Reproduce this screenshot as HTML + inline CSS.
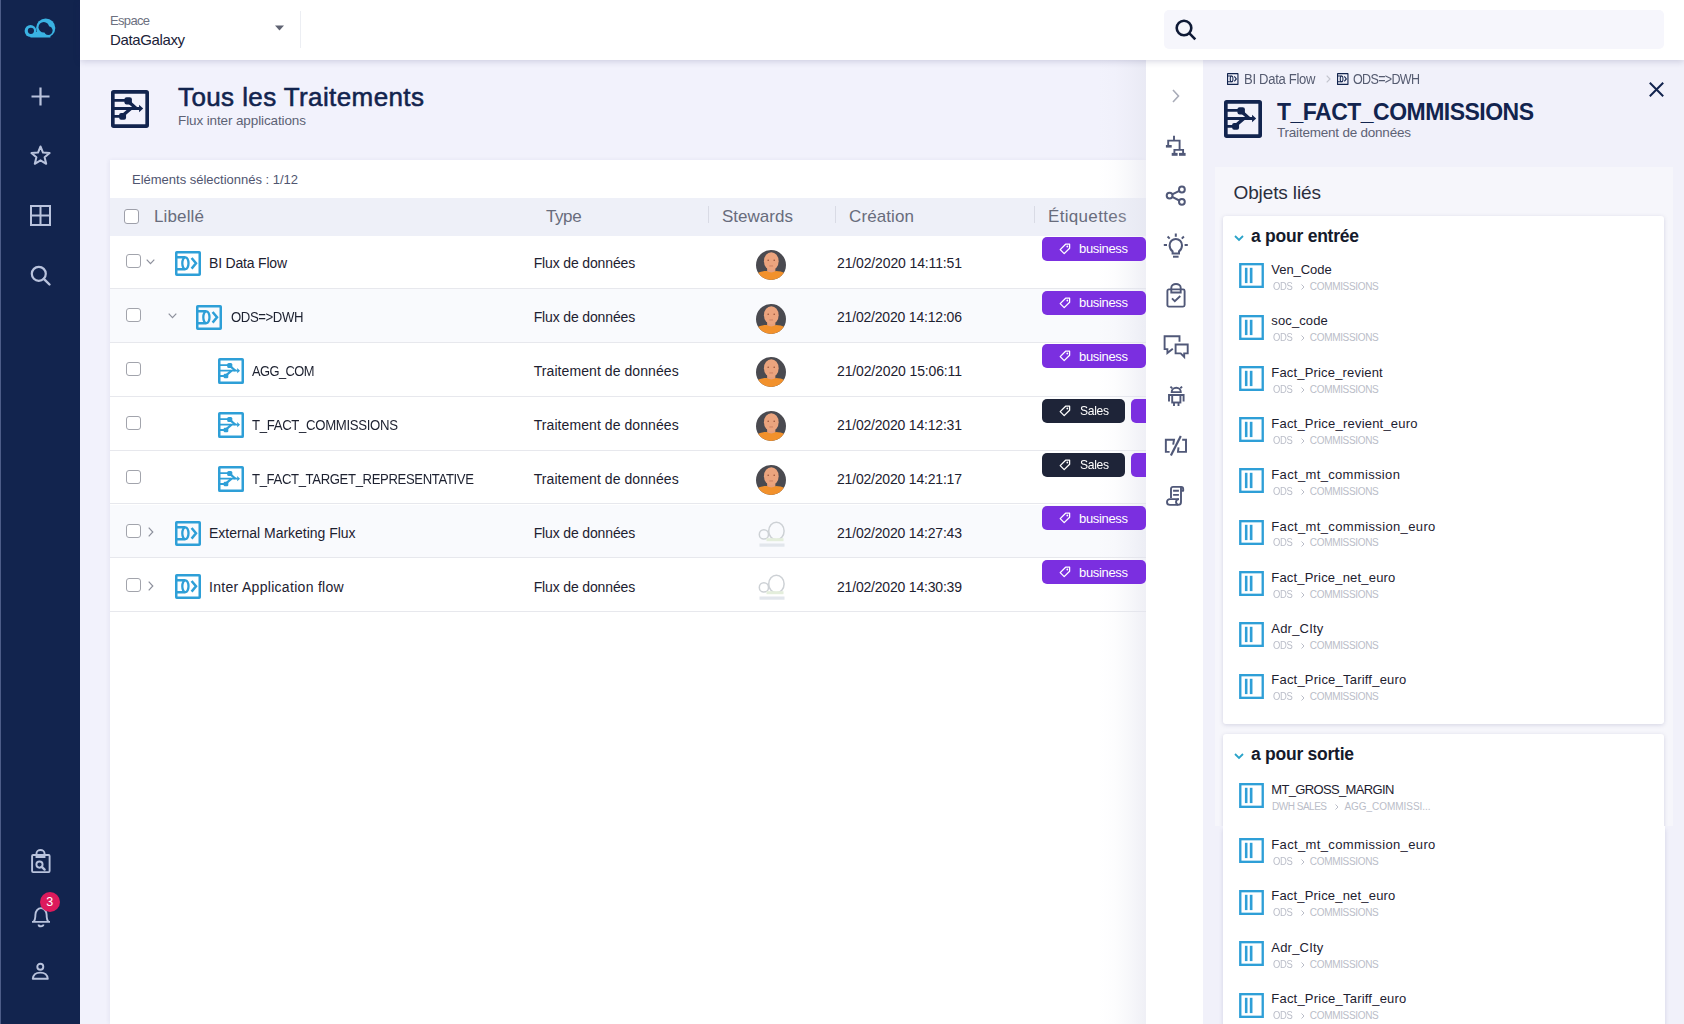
<!DOCTYPE html>
<html><head><meta charset="utf-8">
<style>
*{box-sizing:border-box;margin:0;padding:0}
html,body{width:1684px;height:1024px;overflow:hidden}
body{position:relative;background:#f2f2fc;font-family:"Liberation Sans",sans-serif;color:#1b1f2e}
.abs{position:absolute}
.t{position:absolute;white-space:nowrap;line-height:1}
svg.i{position:absolute;overflow:visible}
</style></head><body>
<svg width="0" height="0" style="position:absolute">
<defs>
<g id="flow"><rect x="1.25" y="1.25" width="23.5" height="22.5" rx="0.5" fill="none" stroke="currentColor" stroke-width="2.5"/>
<path d="M2 6.3H10.3M2 18.2H10.3" stroke="currentColor" stroke-width="2.4" fill="none"/>
<ellipse cx="10.4" cy="12.25" rx="3.1" ry="5.95" fill="none" stroke="currentColor" stroke-width="2.3"/>
<path d="M16.6 7L21 12.3L16.6 17.6" stroke="currentColor" stroke-width="2.5" fill="none"/></g>
<g id="proc"><rect x="1.25" y="1.25" width="23.5" height="23.5" rx="0.6" fill="none" stroke="currentColor" stroke-width="2.5"/>
<path d="M2 7.1H11M2 12.65H19.6M2 18H7" stroke="currentColor" stroke-width="1.9" fill="none"/>
<path d="M12.3 8.2L17.3 12.65M8.6 16.9L13.6 12.65" stroke="currentColor" stroke-width="2.2" fill="none"/>
<rect x="9.2" y="4.9" width="5.1" height="5" rx="1.5" fill="currentColor"/><rect x="5.6" y="15.7" width="4.7" height="4.6" rx="1.3" fill="currentColor"/>
<path d="M19.2 10.1L22 12.65L19.2 15.2Z" fill="currentColor"/></g>
<g id="field"><rect x="1.15" y="1.15" width="22" height="22.2" fill="none" stroke="currentColor" stroke-width="2.3"/>
<rect x="5.7" y="4.7" width="2.5" height="15" fill="currentColor"/><rect x="10.5" y="4.7" width="2.6" height="15" fill="currentColor"/></g>
<g id="tagic"><path d="M1.2 6.6L6.6 1.2H10.6V5.2L5.2 10.6Z" fill="none" stroke="#fff" stroke-width="1.3" stroke-linejoin="round"/><circle cx="8.3" cy="3.5" r="0.9" fill="#fff"/></g>
<clipPath id="avc"><circle cx="15.5" cy="15.5" r="15.5"/></clipPath>
<g id="ghost" fill="none" stroke="#cdd1d5" stroke-width="1.5"><circle cx="5.9" cy="13.4" r="4.6"/><ellipse cx="18.4" cy="10" rx="7.7" ry="8.8"/>
<rect x="8.5" y="17.2" width="17" height="3" fill="#e4eedc" stroke="none"/>
<rect x="1.5" y="22.5" width="25" height="3.2" fill="#e2e6ec" stroke="none"/></g>
</defs></svg>
<div class="abs" style="left:0;top:0;width:80px;height:1024px;background:#12244e"></div>
<div class="abs" style="left:0;top:0;width:1px;height:1024px;background:#4d5d88"></div>
<svg class="i" style="left:20px;top:14px" width="42" height="28" viewBox="0 0 42 28">
<defs><mask id="cm"><rect width="42" height="28" fill="#fff"/><circle cx="10.9" cy="16.8" r="3.1" fill="#000"/><circle cx="23.8" cy="13.2" r="5.3" fill="#000"/><circle cx="28.3" cy="16.6" r="4.3" fill="#000"/></mask>
<clipPath id="cc"><rect width="42" height="23.5"/></clipPath></defs>
<g mask="url(#cm)" clip-path="url(#cc)" fill="#3ab3e3"><circle cx="10.5" cy="17" r="5.9"/><circle cx="25.7" cy="14.05" r="9.6"/><rect x="10.4" y="18" width="20" height="6"/></g>
</svg>
<svg class="i" style="left:31px;top:87px" width="19" height="19" viewBox="0 0 19 19"><path d="M9.5 0.5V18.5M0.5 9.5H18.5" stroke="#b9c3dd" stroke-width="2.2"/></svg>
<svg class="i" style="left:30px;top:145px" width="21" height="21" viewBox="0 0 21 21"><path d="M10.5 1.5L13 7.6L19.6 8.1L14.6 12.3L16.2 18.8L10.5 15.3L4.8 18.8L6.4 12.3L1.4 8.1L8 7.6Z" fill="none" stroke="#b9c3dd" stroke-width="2" stroke-linejoin="round"/></svg>
<svg class="i" style="left:30px;top:205px" width="21" height="21" viewBox="0 0 21 21"><rect x="1" y="1" width="19" height="19" fill="none" stroke="#b9c3dd" stroke-width="2"/><path d="M10.5 1V20M1 10.5H20" stroke="#b9c3dd" stroke-width="2"/></svg>
<svg class="i" style="left:30px;top:265px" width="21" height="21" viewBox="0 0 21 21"><circle cx="8.8" cy="8.8" r="7" fill="none" stroke="#b9c3dd" stroke-width="2.2"/><path d="M13.8 13.8L19.5 19.5" stroke="#b9c3dd" stroke-width="2.4" stroke-linecap="round"/></svg>
<svg class="i" style="left:31px;top:849px" width="20" height="25" viewBox="0 0 20 25"><g fill="none" stroke="#b9c3dd" stroke-width="1.9">
<rect x="1.1" y="6" width="17.5" height="17.1" rx="1"/><path d="M5.5 8V4.3A4 3.3 0 0 1 13.5 4.3V8Z"/>
<circle cx="8.5" cy="15.6" r="3.1"/></g><path d="M10.8 17.9L13.6 20.6" stroke="#b9c3dd" stroke-width="2.4" stroke-linecap="round"/></svg>
<svg class="i" style="left:31px;top:906px" width="20" height="21" viewBox="0 0 20 21"><g fill="none" stroke="#b9c3dd" stroke-width="1.9">
<path d="M1 15.9H19M2.4 15.9C4.4 14 4.4 11.5 4.4 8.8A5.6 6.7 0 0 1 15.6 8.8C15.6 11.5 15.6 14 17.6 15.9"/><path d="M7.6 18.4A2.4 1.9 0 0 0 12.4 18.4"/></g></svg>
<div class="abs" style="left:40px;top:892px;width:20px;height:20px;border-radius:10px;background:#dd1a5c"></div>
<div class="t" style="left:46.20px;top:896.02px;font-size:12.5px;color:#fff;">3</div>
<svg class="i" style="left:31px;top:963px" width="19" height="18" viewBox="0 0 19 18"><g fill="none" stroke="#b9c3dd" stroke-width="1.9" stroke-linejoin="round">
<circle cx="9.3" cy="3.8" r="3"/><path d="M1.8 15.8C2.2 11.5 5.5 9.6 9.3 9.6C13.1 9.6 16.4 11.5 16.8 15.8Z"/></g></svg>
<div class="abs" style="left:80px;top:0;width:1604px;height:60px;background:#fff;box-shadow:0 1px 7px rgba(30,30,90,.2);z-index:6"></div>
<div style="position:absolute;left:0;top:0;z-index:7">
<div class="t" style="left:110.00px;top:14.00px;font-size:13px;color:#6c7080;letter-spacing:-0.672px;">Espace</div>
<div class="t" style="left:110.00px;top:32.30px;font-size:15px;color:#1b2238;letter-spacing:-0.374px;">DataGalaxy</div>
<svg class="i" style="left:275px;top:25px" width="9" height="6" viewBox="0 0 9 6"><path d="M0 0.5H9L4.5 5.5Z" fill="#5f6372"/></svg>
<div class="abs" style="left:300px;top:11px;width:1px;height:37px;background:#eceef3"></div>
<div class="abs" style="left:1164px;top:10px;width:500px;height:39px;border-radius:5px;background:#f6f6fc"></div>
<svg class="i" style="left:1175px;top:19px" width="22" height="22" viewBox="0 0 22 22"><circle cx="9" cy="9" r="7.3" fill="none" stroke="#0f1a36" stroke-width="2.6"/><path d="M14.2 14.2L20.3 20.3" stroke="#0f1a36" stroke-width="2.6"/></svg>
</div>
<svg class="i" style="left:111px;top:90px;color:#12244e" width="38" height="38" viewBox="0 0 26 26"><g><rect x="1.25" y="1.25" width="23.5" height="23.5" rx="0.6" fill="none" stroke="currentColor" stroke-width="2.5"/>
<path d="M2 7.1H11M2 12.65H19.6M2 18H7" stroke="currentColor" stroke-width="1.9" fill="none"/>
<path d="M12.3 8.2L17.3 12.65M8.6 16.9L13.6 12.65" stroke="currentColor" stroke-width="2.2" fill="none"/>
<rect x="9.2" y="4.9" width="5.1" height="5" rx="1.5" fill="currentColor"/><rect x="5.6" y="15.7" width="4.7" height="4.6" rx="1.3" fill="currentColor"/>
<path d="M19.2 10.1L22 12.65L19.2 15.2Z" fill="currentColor"/></g></svg>
<div class="t" style="left:178.00px;top:83.99px;font-size:26px;color:#12244e;-webkit-text-stroke:0.55px #12244e;letter-spacing:0.398px;">Tous les Traitements</div>
<div class="t" style="left:178.00px;top:114.07px;font-size:13.5px;color:#5d6275;letter-spacing:-0.117px;">Flux inter applications</div>
<div class="abs" style="left:110px;top:160px;width:1036px;height:864px;background:#fff;box-shadow:-1px 0 4px rgba(60,60,120,.07)"></div>
<div class="t" style="left:132.00px;top:172.60px;font-size:13px;color:#4f5570;letter-spacing:-0.008px;">Eléments sélectionnés : 1/12</div>
<div class="abs" style="left:110px;top:198px;width:1036px;height:38px;background:#eef0f8"></div>
<div class="abs" style="left:124px;top:209px;width:15px;height:14.5px;border:1.3px solid #9ea0aa;border-radius:3px;background:#fff"></div>
<div class="t" style="left:154.00px;top:207.61px;font-size:17px;color:#686c7c;letter-spacing:0.141px;">Libellé</div>
<div class="t" style="left:546.00px;top:207.61px;font-size:17px;color:#686c7c;letter-spacing:-0.419px;">Type</div>
<div class="t" style="left:722.00px;top:207.61px;font-size:17px;color:#686c7c;letter-spacing:0.019px;">Stewards</div>
<div class="t" style="left:849.00px;top:207.61px;font-size:17px;color:#686c7c;letter-spacing:0.106px;">Création</div>
<div class="t" style="left:1048.00px;top:207.61px;font-size:17px;color:#686c7c;letter-spacing:0.322px;">Étiquettes</div>
<div class="abs" style="left:708px;top:206px;width:1px;height:17px;background:#d9dbe5"></div>
<div class="abs" style="left:834.5px;top:206px;width:1px;height:17px;background:#d9dbe5"></div>
<div class="abs" style="left:1034px;top:206px;width:1px;height:17px;background:#d9dbe5"></div>
<div class="abs" style="left:110px;top:236.00px;width:1036px;height:52.98px;background:#fff;border-bottom:1px solid #e7e8ed"></div>
<div class="abs" style="left:110px;top:288.98px;width:1036px;height:53.88px;background:#f9fafd;border-bottom:1px solid #e7e8ed"></div>
<div class="abs" style="left:110px;top:342.86px;width:1036px;height:53.88px;background:#fff;border-bottom:1px solid #e7e8ed"></div>
<div class="abs" style="left:110px;top:396.74px;width:1036px;height:53.88px;background:#fff;border-bottom:1px solid #e7e8ed"></div>
<div class="abs" style="left:110px;top:450.62px;width:1036px;height:53.88px;background:#fff;border-bottom:1px solid #e7e8ed"></div>
<div class="abs" style="left:110px;top:504.50px;width:1036px;height:53.88px;background:#f9fafd;border-bottom:1px solid #e7e8ed"></div>
<div class="abs" style="left:110px;top:558.38px;width:1036px;height:53.88px;background:#fff;border-bottom:1px solid #e7e8ed"></div>
<div class="abs" style="left:1098px;top:60px;width:48px;height:964px;background:linear-gradient(to right,rgba(226,227,238,0) 0%,rgba(226,227,238,.08) 35%,rgba(226,227,238,.3) 70%,rgba(226,227,238,.55) 100%)"></div>
<div class="abs" style="left:125.5px;top:254.30px;width:15px;height:14px;border:1.3px solid #a2a4ac;border-radius:3px;background:#fff"></div>
<svg class="i" style="left:146px;top:259.10px" width="9" height="6" viewBox="0 0 9 6"><path d="M0.7 0.7L4.5 4.6L8.3 0.7" fill="none" stroke="#8d909c" stroke-width="1.2"/></svg>
<svg class="i" style="left:174.5px;top:251.10px;color:#2e9fd7" width="26" height="25" viewBox="0 0 26 25"><g><rect x="1.25" y="1.25" width="23.5" height="22.5" rx="0.5" fill="none" stroke="currentColor" stroke-width="2.5"/>
<path d="M2 6.3H10.3M2 18.2H10.3" stroke="currentColor" stroke-width="2.4" fill="none"/>
<ellipse cx="10.4" cy="12.25" rx="3.1" ry="5.95" fill="none" stroke="currentColor" stroke-width="2.3"/>
<path d="M16.6 7L21 12.3L16.6 17.6" stroke="currentColor" stroke-width="2.5" fill="none"/></g></svg>
<div class="t" style="left:209.00px;top:256.25px;font-size:14px;color:#1d2130;letter-spacing:-0.194px;">BI Data Flow</div>
<div class="t" style="left:533.70px;top:256.25px;font-size:14px;color:#1d2130;letter-spacing:-0.144px;">Flux de données</div>
<svg class="i" style="left:756.3px;top:249.70px" width="30" height="30" viewBox="0 0 31 31"><g clip-path="url(#avc)"><rect width="31" height="31" fill="#4a4a50"/>
<rect x="11.5" y="15" width="8.5" height="9" fill="#e6a07c"/>
<path d="M0 31V24.5C4 22.5 8 21.8 11 21.8Q15.7 24.5 20.5 21.8C23.5 21.8 27.5 22.5 31 24.5V31Z" fill="#f2912c"/>
<ellipse cx="15.8" cy="11.6" rx="7.6" ry="9.3" fill="#eba47e"/>
<circle cx="12.6" cy="10.6" r="0.75" fill="#8f4a32"/><circle cx="18.8" cy="10.6" r="0.75" fill="#8f4a32"/>
<path d="M13.8 16.5H17.6" stroke="#b86a50" stroke-width="0.6"/>
</g></svg>
<div class="t" style="left:837.00px;top:256.25px;font-size:14px;color:#1d2130;letter-spacing:-0.134px;">21/02/2020 14:11:51</div>
<div class="abs" style="left:1041.5px;top:236.70px;width:104px;height:24px;border-radius:5px;background:#7b2fe0"></div>
<svg class="i" style="left:1058.5px;top:242.70px" width="12" height="12" viewBox="0 0 12 12"><g><path d="M1.2 6.6L6.6 1.2H10.6V5.2L5.2 10.6Z" fill="none" stroke="#fff" stroke-width="1.3" stroke-linejoin="round"/><circle cx="8.3" cy="3.5" r="0.9" fill="#fff"/></g></svg>
<div class="t" style="left:1079.00px;top:242.40px;font-size:13px;color:#fff;letter-spacing:-0.330px;">business</div>
<div class="abs" style="left:125.5px;top:308.18px;width:15px;height:14px;border:1.3px solid #a2a4ac;border-radius:3px;background:#fff"></div>
<svg class="i" style="left:168px;top:312.98px" width="9" height="6" viewBox="0 0 9 6"><path d="M0.7 0.7L4.5 4.6L8.3 0.7" fill="none" stroke="#8d909c" stroke-width="1.2"/></svg>
<svg class="i" style="left:196px;top:304.98px;color:#2e9fd7" width="26" height="25" viewBox="0 0 26 25"><g><rect x="1.25" y="1.25" width="23.5" height="22.5" rx="0.5" fill="none" stroke="currentColor" stroke-width="2.5"/>
<path d="M2 6.3H10.3M2 18.2H10.3" stroke="currentColor" stroke-width="2.4" fill="none"/>
<ellipse cx="10.4" cy="12.25" rx="3.1" ry="5.95" fill="none" stroke="currentColor" stroke-width="2.3"/>
<path d="M16.6 7L21 12.3L16.6 17.6" stroke="currentColor" stroke-width="2.5" fill="none"/></g></svg>
<div class="t" style="left:230.50px;top:310.13px;font-size:14px;color:#1d2130;letter-spacing:-0.436px;transform:scaleX(0.9406);transform-origin:0 0;">ODS=&gt;DWH</div>
<div class="t" style="left:533.70px;top:310.13px;font-size:14px;color:#1d2130;letter-spacing:-0.144px;">Flux de données</div>
<svg class="i" style="left:756.3px;top:303.58px" width="30" height="30" viewBox="0 0 31 31"><g clip-path="url(#avc)"><rect width="31" height="31" fill="#4a4a50"/>
<rect x="11.5" y="15" width="8.5" height="9" fill="#e6a07c"/>
<path d="M0 31V24.5C4 22.5 8 21.8 11 21.8Q15.7 24.5 20.5 21.8C23.5 21.8 27.5 22.5 31 24.5V31Z" fill="#f2912c"/>
<ellipse cx="15.8" cy="11.6" rx="7.6" ry="9.3" fill="#eba47e"/>
<circle cx="12.6" cy="10.6" r="0.75" fill="#8f4a32"/><circle cx="18.8" cy="10.6" r="0.75" fill="#8f4a32"/>
<path d="M13.8 16.5H17.6" stroke="#b86a50" stroke-width="0.6"/>
</g></svg>
<div class="t" style="left:837.00px;top:310.13px;font-size:14px;color:#1d2130;letter-spacing:-0.192px;">21/02/2020 14:12:06</div>
<div class="abs" style="left:1041.5px;top:290.58px;width:104px;height:24px;border-radius:5px;background:#7b2fe0"></div>
<svg class="i" style="left:1058.5px;top:296.58px" width="12" height="12" viewBox="0 0 12 12"><g><path d="M1.2 6.6L6.6 1.2H10.6V5.2L5.2 10.6Z" fill="none" stroke="#fff" stroke-width="1.3" stroke-linejoin="round"/><circle cx="8.3" cy="3.5" r="0.9" fill="#fff"/></g></svg>
<div class="t" style="left:1079.00px;top:296.28px;font-size:13px;color:#fff;letter-spacing:-0.330px;">business</div>
<div class="abs" style="left:125.5px;top:362.06px;width:15px;height:14px;border:1.3px solid #a2a4ac;border-radius:3px;background:#fff"></div>
<svg class="i" style="left:218px;top:357.86px;color:#2e9fd7" width="26" height="26" viewBox="0 0 26 26"><g><rect x="1.25" y="1.25" width="23.5" height="23.5" rx="0.6" fill="none" stroke="currentColor" stroke-width="2.5"/>
<path d="M2 7.1H11M2 12.65H19.6M2 18H7" stroke="currentColor" stroke-width="1.9" fill="none"/>
<path d="M12.3 8.2L17.3 12.65M8.6 16.9L13.6 12.65" stroke="currentColor" stroke-width="2.2" fill="none"/>
<rect x="9.2" y="4.9" width="5.1" height="5" rx="1.5" fill="currentColor"/><rect x="5.6" y="15.7" width="4.7" height="4.6" rx="1.3" fill="currentColor"/>
<path d="M19.2 10.1L22 12.65L19.2 15.2Z" fill="currentColor"/></g></svg>
<div class="t" style="left:252.30px;top:364.01px;font-size:14px;color:#1d2130;letter-spacing:-0.604px;transform:scaleX(0.9199);transform-origin:0 0;">AGG_COM</div>
<div class="t" style="left:533.70px;top:364.01px;font-size:14px;color:#1d2130;letter-spacing:0.077px;">Traitement de données</div>
<svg class="i" style="left:756.3px;top:357.46px" width="30" height="30" viewBox="0 0 31 31"><g clip-path="url(#avc)"><rect width="31" height="31" fill="#4a4a50"/>
<rect x="11.5" y="15" width="8.5" height="9" fill="#e6a07c"/>
<path d="M0 31V24.5C4 22.5 8 21.8 11 21.8Q15.7 24.5 20.5 21.8C23.5 21.8 27.5 22.5 31 24.5V31Z" fill="#f2912c"/>
<ellipse cx="15.8" cy="11.6" rx="7.6" ry="9.3" fill="#eba47e"/>
<circle cx="12.6" cy="10.6" r="0.75" fill="#8f4a32"/><circle cx="18.8" cy="10.6" r="0.75" fill="#8f4a32"/>
<path d="M13.8 16.5H17.6" stroke="#b86a50" stroke-width="0.6"/>
</g></svg>
<div class="t" style="left:837.00px;top:364.01px;font-size:14px;color:#1d2130;letter-spacing:-0.134px;">21/02/2020 15:06:11</div>
<div class="abs" style="left:1041.5px;top:344.46px;width:104px;height:24px;border-radius:5px;background:#7b2fe0"></div>
<svg class="i" style="left:1058.5px;top:350.46px" width="12" height="12" viewBox="0 0 12 12"><g><path d="M1.2 6.6L6.6 1.2H10.6V5.2L5.2 10.6Z" fill="none" stroke="#fff" stroke-width="1.3" stroke-linejoin="round"/><circle cx="8.3" cy="3.5" r="0.9" fill="#fff"/></g></svg>
<div class="t" style="left:1079.00px;top:350.16px;font-size:13px;color:#fff;letter-spacing:-0.330px;">business</div>
<div class="abs" style="left:125.5px;top:415.94px;width:15px;height:14px;border:1.3px solid #a2a4ac;border-radius:3px;background:#fff"></div>
<svg class="i" style="left:218px;top:411.74px;color:#2e9fd7" width="26" height="26" viewBox="0 0 26 26"><g><rect x="1.25" y="1.25" width="23.5" height="23.5" rx="0.6" fill="none" stroke="currentColor" stroke-width="2.5"/>
<path d="M2 7.1H11M2 12.65H19.6M2 18H7" stroke="currentColor" stroke-width="1.9" fill="none"/>
<path d="M12.3 8.2L17.3 12.65M8.6 16.9L13.6 12.65" stroke="currentColor" stroke-width="2.2" fill="none"/>
<rect x="9.2" y="4.9" width="5.1" height="5" rx="1.5" fill="currentColor"/><rect x="5.6" y="15.7" width="4.7" height="4.6" rx="1.3" fill="currentColor"/>
<path d="M19.2 10.1L22 12.65L19.2 15.2Z" fill="currentColor"/></g></svg>
<div class="t" style="left:252.30px;top:417.89px;font-size:14px;color:#1d2130;letter-spacing:-0.354px;transform:scaleX(0.9418);transform-origin:0 0;">T_FACT_COMMISSIONS</div>
<div class="t" style="left:533.70px;top:417.89px;font-size:14px;color:#1d2130;letter-spacing:0.077px;">Traitement de données</div>
<svg class="i" style="left:756.3px;top:411.34px" width="30" height="30" viewBox="0 0 31 31"><g clip-path="url(#avc)"><rect width="31" height="31" fill="#4a4a50"/>
<rect x="11.5" y="15" width="8.5" height="9" fill="#e6a07c"/>
<path d="M0 31V24.5C4 22.5 8 21.8 11 21.8Q15.7 24.5 20.5 21.8C23.5 21.8 27.5 22.5 31 24.5V31Z" fill="#f2912c"/>
<ellipse cx="15.8" cy="11.6" rx="7.6" ry="9.3" fill="#eba47e"/>
<circle cx="12.6" cy="10.6" r="0.75" fill="#8f4a32"/><circle cx="18.8" cy="10.6" r="0.75" fill="#8f4a32"/>
<path d="M13.8 16.5H17.6" stroke="#b86a50" stroke-width="0.6"/>
</g></svg>
<div class="t" style="left:837.00px;top:417.89px;font-size:14px;color:#1d2130;letter-spacing:-0.192px;">21/02/2020 14:12:31</div>
<div class="abs" style="left:1041.5px;top:398.64px;width:83.5px;height:24.4px;border-radius:5px;background:#1e2438"></div>
<svg class="i" style="left:1058.5px;top:404.74px" width="12" height="12" viewBox="0 0 12 12"><g><path d="M1.2 6.6L6.6 1.2H10.6V5.2L5.2 10.6Z" fill="none" stroke="#fff" stroke-width="1.3" stroke-linejoin="round"/><circle cx="8.3" cy="3.5" r="0.9" fill="#fff"/></g></svg>
<div class="t" style="left:1080.00px;top:404.24px;font-size:13px;color:#fff;letter-spacing:-0.352px;transform:scaleX(0.9321);transform-origin:0 0;">Sales</div>
<div class="abs" style="left:1131px;top:398.64px;width:30px;height:24.4px;border-radius:5px;background:#7b2fe0"></div>
<div class="abs" style="left:125.5px;top:469.82px;width:15px;height:14px;border:1.3px solid #a2a4ac;border-radius:3px;background:#fff"></div>
<svg class="i" style="left:218px;top:465.62px;color:#2e9fd7" width="26" height="26" viewBox="0 0 26 26"><g><rect x="1.25" y="1.25" width="23.5" height="23.5" rx="0.6" fill="none" stroke="currentColor" stroke-width="2.5"/>
<path d="M2 7.1H11M2 12.65H19.6M2 18H7" stroke="currentColor" stroke-width="1.9" fill="none"/>
<path d="M12.3 8.2L17.3 12.65M8.6 16.9L13.6 12.65" stroke="currentColor" stroke-width="2.2" fill="none"/>
<rect x="9.2" y="4.9" width="5.1" height="5" rx="1.5" fill="currentColor"/><rect x="5.6" y="15.7" width="4.7" height="4.6" rx="1.3" fill="currentColor"/>
<path d="M19.2 10.1L22 12.65L19.2 15.2Z" fill="currentColor"/></g></svg>
<div class="t" style="left:252.30px;top:471.77px;font-size:14px;color:#1d2130;letter-spacing:-0.376px;transform:scaleX(0.9358);transform-origin:0 0;">T_FACT_TARGET_REPRESENTATIVE</div>
<div class="t" style="left:533.70px;top:471.77px;font-size:14px;color:#1d2130;letter-spacing:0.077px;">Traitement de données</div>
<svg class="i" style="left:756.3px;top:465.22px" width="30" height="30" viewBox="0 0 31 31"><g clip-path="url(#avc)"><rect width="31" height="31" fill="#4a4a50"/>
<rect x="11.5" y="15" width="8.5" height="9" fill="#e6a07c"/>
<path d="M0 31V24.5C4 22.5 8 21.8 11 21.8Q15.7 24.5 20.5 21.8C23.5 21.8 27.5 22.5 31 24.5V31Z" fill="#f2912c"/>
<ellipse cx="15.8" cy="11.6" rx="7.6" ry="9.3" fill="#eba47e"/>
<circle cx="12.6" cy="10.6" r="0.75" fill="#8f4a32"/><circle cx="18.8" cy="10.6" r="0.75" fill="#8f4a32"/>
<path d="M13.8 16.5H17.6" stroke="#b86a50" stroke-width="0.6"/>
</g></svg>
<div class="t" style="left:837.00px;top:471.77px;font-size:14px;color:#1d2130;letter-spacing:-0.192px;">21/02/2020 14:21:17</div>
<div class="abs" style="left:1041.5px;top:452.52px;width:83.5px;height:24.4px;border-radius:5px;background:#1e2438"></div>
<svg class="i" style="left:1058.5px;top:458.62px" width="12" height="12" viewBox="0 0 12 12"><g><path d="M1.2 6.6L6.6 1.2H10.6V5.2L5.2 10.6Z" fill="none" stroke="#fff" stroke-width="1.3" stroke-linejoin="round"/><circle cx="8.3" cy="3.5" r="0.9" fill="#fff"/></g></svg>
<div class="t" style="left:1080.00px;top:458.12px;font-size:13px;color:#fff;letter-spacing:-0.352px;transform:scaleX(0.9321);transform-origin:0 0;">Sales</div>
<div class="abs" style="left:1131px;top:452.52px;width:30px;height:24.4px;border-radius:5px;background:#7b2fe0"></div>
<div class="abs" style="left:125.5px;top:523.70px;width:15px;height:14px;border:1.3px solid #a2a4ac;border-radius:3px;background:#fff"></div>
<svg class="i" style="left:147.5px;top:527.00px" width="6" height="10" viewBox="0 0 6 10"><path d="M0.7 0.7L4.8 5L0.7 9.3" fill="none" stroke="#8d909c" stroke-width="1.2"/></svg>
<svg class="i" style="left:174.5px;top:520.50px;color:#2e9fd7" width="26" height="25" viewBox="0 0 26 25"><g><rect x="1.25" y="1.25" width="23.5" height="22.5" rx="0.5" fill="none" stroke="currentColor" stroke-width="2.5"/>
<path d="M2 6.3H10.3M2 18.2H10.3" stroke="currentColor" stroke-width="2.4" fill="none"/>
<ellipse cx="10.4" cy="12.25" rx="3.1" ry="5.95" fill="none" stroke="currentColor" stroke-width="2.3"/>
<path d="M16.6 7L21 12.3L16.6 17.6" stroke="currentColor" stroke-width="2.5" fill="none"/></g></svg>
<div class="t" style="left:209.00px;top:525.65px;font-size:14px;color:#1d2130;letter-spacing:-0.025px;">External Marketing Flux</div>
<div class="t" style="left:533.70px;top:525.65px;font-size:14px;color:#1d2130;letter-spacing:-0.144px;">Flux de données</div>
<svg class="i" style="left:758px;top:520.50px" width="28" height="28" viewBox="0 0 28 28"><g fill="none" stroke="#cdd1d5" stroke-width="1.5"><circle cx="5.9" cy="13.4" r="4.6"/><ellipse cx="18.4" cy="10" rx="7.7" ry="8.8"/>
<rect x="8.5" y="17.2" width="17" height="3" fill="#e4eedc" stroke="none"/>
<rect x="1.5" y="22.5" width="25" height="3.2" fill="#e2e6ec" stroke="none"/></g></svg>
<div class="t" style="left:837.00px;top:525.65px;font-size:14px;color:#1d2130;letter-spacing:-0.192px;">21/02/2020 14:27:43</div>
<div class="abs" style="left:1041.5px;top:506.10px;width:104px;height:24px;border-radius:5px;background:#7b2fe0"></div>
<svg class="i" style="left:1058.5px;top:512.10px" width="12" height="12" viewBox="0 0 12 12"><g><path d="M1.2 6.6L6.6 1.2H10.6V5.2L5.2 10.6Z" fill="none" stroke="#fff" stroke-width="1.3" stroke-linejoin="round"/><circle cx="8.3" cy="3.5" r="0.9" fill="#fff"/></g></svg>
<div class="t" style="left:1079.00px;top:511.80px;font-size:13px;color:#fff;letter-spacing:-0.330px;">business</div>
<div class="abs" style="left:125.5px;top:577.58px;width:15px;height:14px;border:1.3px solid #a2a4ac;border-radius:3px;background:#fff"></div>
<svg class="i" style="left:147.5px;top:580.88px" width="6" height="10" viewBox="0 0 6 10"><path d="M0.7 0.7L4.8 5L0.7 9.3" fill="none" stroke="#8d909c" stroke-width="1.2"/></svg>
<svg class="i" style="left:174.5px;top:574.38px;color:#2e9fd7" width="26" height="25" viewBox="0 0 26 25"><g><rect x="1.25" y="1.25" width="23.5" height="22.5" rx="0.5" fill="none" stroke="currentColor" stroke-width="2.5"/>
<path d="M2 6.3H10.3M2 18.2H10.3" stroke="currentColor" stroke-width="2.4" fill="none"/>
<ellipse cx="10.4" cy="12.25" rx="3.1" ry="5.95" fill="none" stroke="currentColor" stroke-width="2.3"/>
<path d="M16.6 7L21 12.3L16.6 17.6" stroke="currentColor" stroke-width="2.5" fill="none"/></g></svg>
<div class="t" style="left:209.00px;top:579.53px;font-size:14px;color:#1d2130;letter-spacing:0.300px;">Inter Application flow</div>
<div class="t" style="left:533.70px;top:579.53px;font-size:14px;color:#1d2130;letter-spacing:-0.144px;">Flux de données</div>
<svg class="i" style="left:758px;top:574.38px" width="28" height="28" viewBox="0 0 28 28"><g fill="none" stroke="#cdd1d5" stroke-width="1.5"><circle cx="5.9" cy="13.4" r="4.6"/><ellipse cx="18.4" cy="10" rx="7.7" ry="8.8"/>
<rect x="8.5" y="17.2" width="17" height="3" fill="#e4eedc" stroke="none"/>
<rect x="1.5" y="22.5" width="25" height="3.2" fill="#e2e6ec" stroke="none"/></g></svg>
<div class="t" style="left:837.00px;top:579.53px;font-size:14px;color:#1d2130;letter-spacing:-0.192px;">21/02/2020 14:30:39</div>
<div class="abs" style="left:1041.5px;top:559.98px;width:104px;height:24px;border-radius:5px;background:#7b2fe0"></div>
<svg class="i" style="left:1058.5px;top:565.98px" width="12" height="12" viewBox="0 0 12 12"><g><path d="M1.2 6.6L6.6 1.2H10.6V5.2L5.2 10.6Z" fill="none" stroke="#fff" stroke-width="1.3" stroke-linejoin="round"/><circle cx="8.3" cy="3.5" r="0.9" fill="#fff"/></g></svg>
<div class="t" style="left:1079.00px;top:565.68px;font-size:13px;color:#fff;letter-spacing:-0.330px;">business</div>
<div class="abs" style="left:1146px;top:60px;width:538px;height:964px;background:#f1f1fa;z-index:3"></div>
<div class="abs" style="left:1146px;top:60px;width:57px;height:964px;background:#fff;z-index:3"></div>
<div style="position:absolute;left:0;top:0;z-index:4">
<svg class="i" style="left:1172px;top:89px" width="8" height="14" viewBox="0 0 8 14"><path d="M1 1L6.5 7L1 13" fill="none" stroke="#a9acb8" stroke-width="1.6"/></svg>
<svg class="i" style="left:1164px;top:134px" width="24" height="24" viewBox="0 0 24 24"><g fill="none" stroke="#505878" stroke-width="1.9">
<path d="M10 1.8V6.6M4.2 12V6.6H15.6V15.9M10.4 20V15.9H19.1V20"/></g>
<rect x="1.9" y="11" width="5.8" height="2.6" fill="#505878"/><rect x="7.7" y="18.9" width="5.9" height="2.9" fill="#505878"/><rect x="15" y="18.9" width="6.6" height="2.9" fill="#505878"/></svg>
<svg class="i" style="left:1166px;top:186px" width="21" height="21" viewBox="0 0 21 21"><g fill="none" stroke="#505878" stroke-width="2">
<circle cx="3.6" cy="9.6" r="2.9"/><circle cx="15.9" cy="3.5" r="2.9"/><circle cx="15.9" cy="15.8" r="2.9"/><path d="M6.2 8.3L13.3 4.8M6.2 10.9L13.3 14.5"/></g></svg>
<svg class="i" style="left:1162px;top:232px" width="28" height="27" viewBox="0 0 28 27"><g fill="none" stroke="#505878" stroke-width="2">
<path d="M10.6 21.5V19.3C8.3 17.8 7.6 15.8 7.6 13.2A6.2 6.2 0 0 1 20 13.2C20 15.8 19.3 17.8 17 19.3V21.5Z"/><path d="M11 24.7H16.6"/>
<path d="M13.8 1.5V4.8M5.6 4.5L7.7 6.6M21.9 4.5L19.8 6.6M1.8 13H5M22.6 13H25.8"/></g></svg>
<svg class="i" style="left:1166px;top:282px" width="20" height="26" viewBox="0 0 20 26"><g fill="none" stroke="#505878" stroke-width="1.9">
<rect x="1.4" y="7.4" width="17.2" height="17.2" rx="1.5"/><path d="M5.3 10.5V5.8A4.7 3.8 0 0 1 14.7 5.8V10.5Z"/><path d="M6 16.4L8.8 19.1L14.3 14"/></g></svg>
<svg class="i" style="left:1163px;top:334px" width="27" height="25" viewBox="0 0 27 25"><g fill="none" stroke="#505878" stroke-width="1.9" stroke-linejoin="miter">
<path d="M16.5 7.7V2.25H1.6V15.1H4.4V19L9.8 14.75"/><path d="M12.6 10.5H24.7V19.4H21.2V23L17.7 19.4H12.6Z"/></g></svg>
<svg class="i" style="left:1167px;top:386px" width="19" height="21" viewBox="0 0 19 21"><g fill="none" stroke="#505878" stroke-width="1.9">
<path d="M3.4 0.6L5.2 2.2M15.1 0.6L13.3 2.2"/><path d="M4.7 6.1A4.55 4.3 0 0 1 13.8 6.1Z"/><path d="M2 15.6V9H16.6V15.6"/><rect x="5.2" y="9" width="8.2" height="7.5"/><path d="M7 16.5V20M11.5 16.5V20"/></g></svg>
<svg class="i" style="left:1163px;top:435px" width="26" height="22" viewBox="0 0 26 22"><g fill="none" stroke="#505878" stroke-width="1.95">
<path d="M10.2 9.6L11 4.8H2.85V16.85H6.6M19.2 4.8H23V16.85H15L15.5 12.3"/><path d="M17.8 1.1L7.9 20.5" stroke-width="2.2"/></g></svg>
<svg class="i" style="left:1164px;top:485px" width="24" height="22" viewBox="0 0 24 22"><g fill="none" stroke="#505878" stroke-width="1.9" stroke-linejoin="round">
<path d="M7 13.1V3.9A2 2 0 0 1 9 1.9H17.2A2 2 0 0 1 19.2 3.9V5.7H17.2"/>
<path d="M17 1.9V17A2.9 2.9 0 0 1 14.1 19.9H5.9A2.9 2.9 0 0 1 3 17A2.9 2.9 0 0 1 5.9 14.1H14.9"/>
<path d="M14.9 14.1C11.5 14.5 11 18.5 14.1 19.9"/>
<path d="M9.1 5.75H14.9M9.1 9.9H14.9"/></g></svg>
<svg class="i" style="left:1226.8px;top:73px;color:#12244e" width="11.5" height="12" viewBox="0 0 26 25" preserveAspectRatio="none"><g><rect x="1.25" y="1.25" width="23.5" height="22.5" rx="0.5" fill="none" stroke="currentColor" stroke-width="2.5"/>
<path d="M2 6.3H10.3M2 18.2H10.3" stroke="currentColor" stroke-width="2.4" fill="none"/>
<ellipse cx="10.4" cy="12.25" rx="3.1" ry="5.95" fill="none" stroke="currentColor" stroke-width="2.3"/>
<path d="M16.6 7L21 12.3L16.6 17.6" stroke="currentColor" stroke-width="2.5" fill="none"/></g></svg>
<div class="t" style="left:1243.50px;top:72.15px;font-size:14px;color:#555b70;letter-spacing:-0.314px;transform:scaleX(0.9324);transform-origin:0 0;">BI Data Flow</div>
<svg class="i" style="left:1325.5px;top:75px" width="5" height="8" viewBox="0 0 5 8"><path d="M0.7 0.7L4 4L0.7 7.3" fill="none" stroke="#c3c5ce" stroke-width="1.2"/></svg>
<svg class="i" style="left:1337px;top:73.3px;color:#12244e" width="11.5" height="12" viewBox="0 0 26 25" preserveAspectRatio="none"><g><rect x="1.25" y="1.25" width="23.5" height="22.5" rx="0.5" fill="none" stroke="currentColor" stroke-width="2.5"/>
<path d="M2 6.3H10.3M2 18.2H10.3" stroke="currentColor" stroke-width="2.4" fill="none"/>
<ellipse cx="10.4" cy="12.25" rx="3.1" ry="5.95" fill="none" stroke="currentColor" stroke-width="2.3"/>
<path d="M16.6 7L21 12.3L16.6 17.6" stroke="currentColor" stroke-width="2.5" fill="none"/></g></svg>
<div class="t" style="left:1353.00px;top:72.45px;font-size:14px;color:#555b70;letter-spacing:-0.750px;transform:scaleX(0.8948);transform-origin:0 0;">ODS=&gt;DWH</div>
<svg class="i" style="left:1648.5px;top:82px" width="15" height="15" viewBox="0 0 15 15"><path d="M0.8 0.8L14.2 14.2M14.2 0.8L0.8 14.2" stroke="#12244e" stroke-width="2"/></svg>
<svg class="i" style="left:1224px;top:100px;color:#12244e" width="38" height="38" viewBox="0 0 26 26"><g><rect x="1.25" y="1.25" width="23.5" height="23.5" rx="0.6" fill="none" stroke="currentColor" stroke-width="2.5"/>
<path d="M2 7.1H11M2 12.65H19.6M2 18H7" stroke="currentColor" stroke-width="1.9" fill="none"/>
<path d="M12.3 8.2L17.3 12.65M8.6 16.9L13.6 12.65" stroke="currentColor" stroke-width="2.2" fill="none"/>
<rect x="9.2" y="4.9" width="5.1" height="5" rx="1.5" fill="currentColor"/><rect x="5.6" y="15.7" width="4.7" height="4.6" rx="1.3" fill="currentColor"/>
<path d="M19.2 10.1L22 12.65L19.2 15.2Z" fill="currentColor"/></g></svg>
<div class="t" style="left:1277.00px;top:101.13px;font-size:23px;color:#12244e;font-weight:bold;letter-spacing:-0.518px;">T_FACT_COMMISSIONS</div>
<div class="t" style="left:1277.00px;top:126.27px;font-size:13.5px;color:#5d6275;letter-spacing:-0.217px;">Traitement de données</div>
<div class="abs" style="left:1215px;top:167px;width:458px;height:857px;background:#f6f6fb"></div>
<div class="t" style="left:1233.50px;top:182.72px;font-size:19px;color:#2a2e3d;letter-spacing:-0.120px;">Objets liés</div>
<div class="abs" style="left:1223px;top:215.6px;width:441px;height:508.69999999999993px;background:#fff;border-radius:3px;box-shadow:0 1px 4px rgba(60,60,120,.18)"></div>
<svg class="i" style="left:1234px;top:235.1px" width="10" height="6" viewBox="0 0 10 6"><path d="M1 1L5 5L9 1" fill="none" stroke="#2aa3c9" stroke-width="1.8"/></svg>
<div class="t" style="left:1251.00px;top:227.79px;font-size:17.5px;color:#151a2b;font-weight:bold;letter-spacing:-0.239px;">a pour entrée</div>
<svg class="i" style="left:1238.5px;top:263.20px;color:#2e9fd7" width="25" height="25" viewBox="0 0 24.3 24.5"><g><rect x="1.15" y="1.15" width="22" height="22.2" fill="none" stroke="currentColor" stroke-width="2.3"/>
<rect x="5.7" y="4.7" width="2.5" height="15" fill="currentColor"/><rect x="10.5" y="4.7" width="2.6" height="15" fill="currentColor"/></g></svg>
<div class="t" style="left:1271.30px;top:263.00px;font-size:13px;color:#1d2130;letter-spacing:-0.046px;">Ven_Code</div>
<div class="t" style="left:1272.70px;top:281.94px;font-size:10px;color:#babdc8;letter-spacing:-0.394px;transform:scaleX(0.9434);transform-origin:0 0;">ODS</div>
<svg class="i" style="left:1300.5px;top:284.10px" width="4" height="6" viewBox="0 0 4 6"><path d="M0.5 0.5L3 3L0.5 5.5" fill="none" stroke="#babdc8" stroke-width="1"/></svg>
<div class="t" style="left:1309.80px;top:281.94px;font-size:10px;color:#babdc8;letter-spacing:-0.323px;">COMMISSIONS</div>
<svg class="i" style="left:1238.5px;top:314.50px;color:#2e9fd7" width="25" height="25" viewBox="0 0 24.3 24.5"><g><rect x="1.15" y="1.15" width="22" height="22.2" fill="none" stroke="currentColor" stroke-width="2.3"/>
<rect x="5.7" y="4.7" width="2.5" height="15" fill="currentColor"/><rect x="10.5" y="4.7" width="2.6" height="15" fill="currentColor"/></g></svg>
<div class="t" style="left:1271.30px;top:314.30px;font-size:13px;color:#1d2130;letter-spacing:0.121px;">soc_code</div>
<div class="t" style="left:1272.70px;top:333.24px;font-size:10px;color:#babdc8;letter-spacing:-0.394px;transform:scaleX(0.9434);transform-origin:0 0;">ODS</div>
<svg class="i" style="left:1300.5px;top:335.40px" width="4" height="6" viewBox="0 0 4 6"><path d="M0.5 0.5L3 3L0.5 5.5" fill="none" stroke="#babdc8" stroke-width="1"/></svg>
<div class="t" style="left:1309.80px;top:333.24px;font-size:10px;color:#babdc8;letter-spacing:-0.323px;">COMMISSIONS</div>
<svg class="i" style="left:1238.5px;top:365.80px;color:#2e9fd7" width="25" height="25" viewBox="0 0 24.3 24.5"><g><rect x="1.15" y="1.15" width="22" height="22.2" fill="none" stroke="currentColor" stroke-width="2.3"/>
<rect x="5.7" y="4.7" width="2.5" height="15" fill="currentColor"/><rect x="10.5" y="4.7" width="2.6" height="15" fill="currentColor"/></g></svg>
<div class="t" style="left:1271.30px;top:365.60px;font-size:13px;color:#1d2130;letter-spacing:0.177px;">Fact_Price_revient</div>
<div class="t" style="left:1272.70px;top:384.53px;font-size:10px;color:#babdc8;letter-spacing:-0.394px;transform:scaleX(0.9434);transform-origin:0 0;">ODS</div>
<svg class="i" style="left:1300.5px;top:386.70px" width="4" height="6" viewBox="0 0 4 6"><path d="M0.5 0.5L3 3L0.5 5.5" fill="none" stroke="#babdc8" stroke-width="1"/></svg>
<div class="t" style="left:1309.80px;top:384.53px;font-size:10px;color:#babdc8;letter-spacing:-0.323px;">COMMISSIONS</div>
<svg class="i" style="left:1238.5px;top:417.10px;color:#2e9fd7" width="25" height="25" viewBox="0 0 24.3 24.5"><g><rect x="1.15" y="1.15" width="22" height="22.2" fill="none" stroke="currentColor" stroke-width="2.3"/>
<rect x="5.7" y="4.7" width="2.5" height="15" fill="currentColor"/><rect x="10.5" y="4.7" width="2.6" height="15" fill="currentColor"/></g></svg>
<div class="t" style="left:1271.30px;top:416.90px;font-size:13px;color:#1d2130;letter-spacing:0.208px;">Fact_Price_revient_euro</div>
<div class="t" style="left:1272.70px;top:435.83px;font-size:10px;color:#babdc8;letter-spacing:-0.394px;transform:scaleX(0.9434);transform-origin:0 0;">ODS</div>
<svg class="i" style="left:1300.5px;top:438.00px" width="4" height="6" viewBox="0 0 4 6"><path d="M0.5 0.5L3 3L0.5 5.5" fill="none" stroke="#babdc8" stroke-width="1"/></svg>
<div class="t" style="left:1309.80px;top:435.83px;font-size:10px;color:#babdc8;letter-spacing:-0.323px;">COMMISSIONS</div>
<svg class="i" style="left:1238.5px;top:468.40px;color:#2e9fd7" width="25" height="25" viewBox="0 0 24.3 24.5"><g><rect x="1.15" y="1.15" width="22" height="22.2" fill="none" stroke="currentColor" stroke-width="2.3"/>
<rect x="5.7" y="4.7" width="2.5" height="15" fill="currentColor"/><rect x="10.5" y="4.7" width="2.6" height="15" fill="currentColor"/></g></svg>
<div class="t" style="left:1271.30px;top:468.20px;font-size:13px;color:#1d2130;letter-spacing:0.341px;">Fact_mt_commission</div>
<div class="t" style="left:1272.70px;top:487.13px;font-size:10px;color:#babdc8;letter-spacing:-0.394px;transform:scaleX(0.9434);transform-origin:0 0;">ODS</div>
<svg class="i" style="left:1300.5px;top:489.30px" width="4" height="6" viewBox="0 0 4 6"><path d="M0.5 0.5L3 3L0.5 5.5" fill="none" stroke="#babdc8" stroke-width="1"/></svg>
<div class="t" style="left:1309.80px;top:487.13px;font-size:10px;color:#babdc8;letter-spacing:-0.323px;">COMMISSIONS</div>
<svg class="i" style="left:1238.5px;top:519.70px;color:#2e9fd7" width="25" height="25" viewBox="0 0 24.3 24.5"><g><rect x="1.15" y="1.15" width="22" height="22.2" fill="none" stroke="currentColor" stroke-width="2.3"/>
<rect x="5.7" y="4.7" width="2.5" height="15" fill="currentColor"/><rect x="10.5" y="4.7" width="2.6" height="15" fill="currentColor"/></g></svg>
<div class="t" style="left:1271.30px;top:519.50px;font-size:13px;color:#1d2130;letter-spacing:0.361px;">Fact_mt_commission_euro</div>
<div class="t" style="left:1272.70px;top:538.44px;font-size:10px;color:#babdc8;letter-spacing:-0.394px;transform:scaleX(0.9434);transform-origin:0 0;">ODS</div>
<svg class="i" style="left:1300.5px;top:540.60px" width="4" height="6" viewBox="0 0 4 6"><path d="M0.5 0.5L3 3L0.5 5.5" fill="none" stroke="#babdc8" stroke-width="1"/></svg>
<div class="t" style="left:1309.80px;top:538.44px;font-size:10px;color:#babdc8;letter-spacing:-0.323px;">COMMISSIONS</div>
<svg class="i" style="left:1238.5px;top:571.00px;color:#2e9fd7" width="25" height="25" viewBox="0 0 24.3 24.5"><g><rect x="1.15" y="1.15" width="22" height="22.2" fill="none" stroke="currentColor" stroke-width="2.3"/>
<rect x="5.7" y="4.7" width="2.5" height="15" fill="currentColor"/><rect x="10.5" y="4.7" width="2.6" height="15" fill="currentColor"/></g></svg>
<div class="t" style="left:1271.30px;top:570.80px;font-size:13px;color:#1d2130;letter-spacing:0.184px;">Fact_Price_net_euro</div>
<div class="t" style="left:1272.70px;top:589.74px;font-size:10px;color:#babdc8;letter-spacing:-0.394px;transform:scaleX(0.9434);transform-origin:0 0;">ODS</div>
<svg class="i" style="left:1300.5px;top:591.90px" width="4" height="6" viewBox="0 0 4 6"><path d="M0.5 0.5L3 3L0.5 5.5" fill="none" stroke="#babdc8" stroke-width="1"/></svg>
<div class="t" style="left:1309.80px;top:589.74px;font-size:10px;color:#babdc8;letter-spacing:-0.323px;">COMMISSIONS</div>
<svg class="i" style="left:1238.5px;top:622.30px;color:#2e9fd7" width="25" height="25" viewBox="0 0 24.3 24.5"><g><rect x="1.15" y="1.15" width="22" height="22.2" fill="none" stroke="currentColor" stroke-width="2.3"/>
<rect x="5.7" y="4.7" width="2.5" height="15" fill="currentColor"/><rect x="10.5" y="4.7" width="2.6" height="15" fill="currentColor"/></g></svg>
<div class="t" style="left:1271.30px;top:622.10px;font-size:13px;color:#1d2130;letter-spacing:0.204px;">Adr_CIty</div>
<div class="t" style="left:1272.70px;top:641.03px;font-size:10px;color:#babdc8;letter-spacing:-0.394px;transform:scaleX(0.9434);transform-origin:0 0;">ODS</div>
<svg class="i" style="left:1300.5px;top:643.20px" width="4" height="6" viewBox="0 0 4 6"><path d="M0.5 0.5L3 3L0.5 5.5" fill="none" stroke="#babdc8" stroke-width="1"/></svg>
<div class="t" style="left:1309.80px;top:641.03px;font-size:10px;color:#babdc8;letter-spacing:-0.323px;">COMMISSIONS</div>
<svg class="i" style="left:1238.5px;top:673.60px;color:#2e9fd7" width="25" height="25" viewBox="0 0 24.3 24.5"><g><rect x="1.15" y="1.15" width="22" height="22.2" fill="none" stroke="currentColor" stroke-width="2.3"/>
<rect x="5.7" y="4.7" width="2.5" height="15" fill="currentColor"/><rect x="10.5" y="4.7" width="2.6" height="15" fill="currentColor"/></g></svg>
<div class="t" style="left:1271.30px;top:673.40px;font-size:13px;color:#1d2130;letter-spacing:0.212px;">Fact_Price_Tariff_euro</div>
<div class="t" style="left:1272.70px;top:692.33px;font-size:10px;color:#babdc8;letter-spacing:-0.394px;transform:scaleX(0.9434);transform-origin:0 0;">ODS</div>
<svg class="i" style="left:1300.5px;top:694.50px" width="4" height="6" viewBox="0 0 4 6"><path d="M0.5 0.5L3 3L0.5 5.5" fill="none" stroke="#babdc8" stroke-width="1"/></svg>
<div class="t" style="left:1309.80px;top:692.33px;font-size:10px;color:#babdc8;letter-spacing:-0.323px;">COMMISSIONS</div>
<div class="abs" style="left:1223px;top:733.8px;width:441px;height:366.20000000000005px;background:#fff;border-radius:3px;box-shadow:0 1px 4px rgba(60,60,120,.18)"></div>
<svg class="i" style="left:1234px;top:753.3px" width="10" height="6" viewBox="0 0 10 6"><path d="M1 1L5 5L9 1" fill="none" stroke="#2aa3c9" stroke-width="1.8"/></svg>
<div class="t" style="left:1251.00px;top:745.99px;font-size:17.5px;color:#151a2b;font-weight:bold;letter-spacing:-0.249px;">a pour sortie</div>
<div class="abs" style="left:1203px;top:826px;width:481px;height:198px;background:#f1f1fa"></div>
<div class="abs" style="left:1222.5px;top:826px;width:442.5px;height:198px;background:#fff;box-shadow:0 3px 4px rgba(60,60,120,.18)"></div>
<div class="abs" style="left:1223px;top:815px;width:441px;height:12px;background:#fff"></div>
<svg class="i" style="left:1238.5px;top:783.00px;color:#2e9fd7" width="25" height="25" viewBox="0 0 24.3 24.5"><g><rect x="1.15" y="1.15" width="22" height="22.2" fill="none" stroke="currentColor" stroke-width="2.3"/>
<rect x="5.7" y="4.7" width="2.5" height="15" fill="currentColor"/><rect x="10.5" y="4.7" width="2.6" height="15" fill="currentColor"/></g></svg>
<div class="t" style="left:1271.30px;top:782.80px;font-size:13px;color:#1d2130;letter-spacing:-0.656px;">MT_GROSS_MARGIN</div>
<div class="t" style="left:1272.00px;top:801.74px;font-size:10px;color:#babdc8;letter-spacing:-0.488px;">DWH SALES</div>
<svg class="i" style="left:1335px;top:803.90px" width="4" height="6" viewBox="0 0 4 6"><path d="M0.5 0.5L3 3L0.5 5.5" fill="none" stroke="#babdc8" stroke-width="1"/></svg>
<div class="t" style="left:1344.50px;top:801.74px;font-size:10px;color:#babdc8;letter-spacing:-0.049px;">AGG_COMMISSI...</div>
<svg class="i" style="left:1238.5px;top:838.00px;color:#2e9fd7" width="25" height="25" viewBox="0 0 24.3 24.5"><g><rect x="1.15" y="1.15" width="22" height="22.2" fill="none" stroke="currentColor" stroke-width="2.3"/>
<rect x="5.7" y="4.7" width="2.5" height="15" fill="currentColor"/><rect x="10.5" y="4.7" width="2.6" height="15" fill="currentColor"/></g></svg>
<div class="t" style="left:1271.30px;top:837.80px;font-size:13px;color:#1d2130;letter-spacing:0.361px;">Fact_mt_commission_euro</div>
<div class="t" style="left:1272.70px;top:856.74px;font-size:10px;color:#babdc8;letter-spacing:-0.394px;transform:scaleX(0.9434);transform-origin:0 0;">ODS</div>
<svg class="i" style="left:1300.5px;top:858.90px" width="4" height="6" viewBox="0 0 4 6"><path d="M0.5 0.5L3 3L0.5 5.5" fill="none" stroke="#babdc8" stroke-width="1"/></svg>
<div class="t" style="left:1309.80px;top:856.74px;font-size:10px;color:#babdc8;letter-spacing:-0.323px;">COMMISSIONS</div>
<svg class="i" style="left:1238.5px;top:889.50px;color:#2e9fd7" width="25" height="25" viewBox="0 0 24.3 24.5"><g><rect x="1.15" y="1.15" width="22" height="22.2" fill="none" stroke="currentColor" stroke-width="2.3"/>
<rect x="5.7" y="4.7" width="2.5" height="15" fill="currentColor"/><rect x="10.5" y="4.7" width="2.6" height="15" fill="currentColor"/></g></svg>
<div class="t" style="left:1271.30px;top:889.30px;font-size:13px;color:#1d2130;letter-spacing:0.184px;">Fact_Price_net_euro</div>
<div class="t" style="left:1272.70px;top:908.24px;font-size:10px;color:#babdc8;letter-spacing:-0.394px;transform:scaleX(0.9434);transform-origin:0 0;">ODS</div>
<svg class="i" style="left:1300.5px;top:910.40px" width="4" height="6" viewBox="0 0 4 6"><path d="M0.5 0.5L3 3L0.5 5.5" fill="none" stroke="#babdc8" stroke-width="1"/></svg>
<div class="t" style="left:1309.80px;top:908.24px;font-size:10px;color:#babdc8;letter-spacing:-0.323px;">COMMISSIONS</div>
<svg class="i" style="left:1238.5px;top:941.00px;color:#2e9fd7" width="25" height="25" viewBox="0 0 24.3 24.5"><g><rect x="1.15" y="1.15" width="22" height="22.2" fill="none" stroke="currentColor" stroke-width="2.3"/>
<rect x="5.7" y="4.7" width="2.5" height="15" fill="currentColor"/><rect x="10.5" y="4.7" width="2.6" height="15" fill="currentColor"/></g></svg>
<div class="t" style="left:1271.30px;top:940.80px;font-size:13px;color:#1d2130;letter-spacing:0.204px;">Adr_CIty</div>
<div class="t" style="left:1272.70px;top:959.74px;font-size:10px;color:#babdc8;letter-spacing:-0.394px;transform:scaleX(0.9434);transform-origin:0 0;">ODS</div>
<svg class="i" style="left:1300.5px;top:961.90px" width="4" height="6" viewBox="0 0 4 6"><path d="M0.5 0.5L3 3L0.5 5.5" fill="none" stroke="#babdc8" stroke-width="1"/></svg>
<div class="t" style="left:1309.80px;top:959.74px;font-size:10px;color:#babdc8;letter-spacing:-0.323px;">COMMISSIONS</div>
<svg class="i" style="left:1238.5px;top:992.50px;color:#2e9fd7" width="25" height="25" viewBox="0 0 24.3 24.5"><g><rect x="1.15" y="1.15" width="22" height="22.2" fill="none" stroke="currentColor" stroke-width="2.3"/>
<rect x="5.7" y="4.7" width="2.5" height="15" fill="currentColor"/><rect x="10.5" y="4.7" width="2.6" height="15" fill="currentColor"/></g></svg>
<div class="t" style="left:1271.30px;top:992.30px;font-size:13px;color:#1d2130;letter-spacing:0.212px;">Fact_Price_Tariff_euro</div>
<div class="t" style="left:1272.70px;top:1011.24px;font-size:10px;color:#babdc8;letter-spacing:-0.394px;transform:scaleX(0.9434);transform-origin:0 0;">ODS</div>
<svg class="i" style="left:1300.5px;top:1013.40px" width="4" height="6" viewBox="0 0 4 6"><path d="M0.5 0.5L3 3L0.5 5.5" fill="none" stroke="#babdc8" stroke-width="1"/></svg>
<div class="t" style="left:1309.80px;top:1011.24px;font-size:10px;color:#babdc8;letter-spacing:-0.323px;">COMMISSIONS</div>
</div>
</body></html>
